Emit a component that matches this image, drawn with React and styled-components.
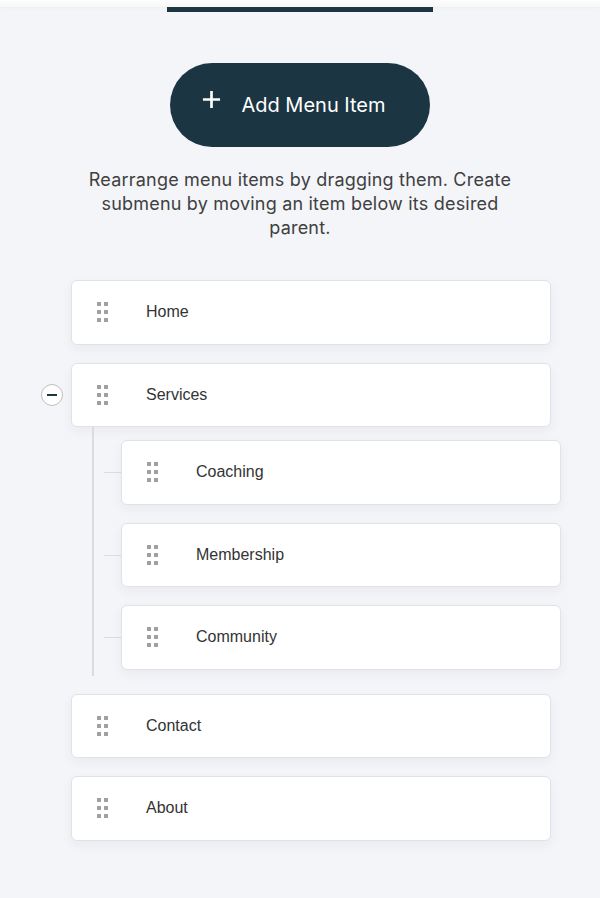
import React from "react";
import styled, { createGlobalStyle } from "styled-components";

const GlobalStyle = createGlobalStyle`
  body {
    margin: 0;
    background: #f4f5f9;
    font-family: "Liberation Sans", Arial, sans-serif;
  }
`;

const menu = [
  { id: 1, label: "Home" },
  {
    id: 2,
    label: "Services",
    children: [
      { id: 3, label: "Coaching" },
      { id: 4, label: "Membership" },
      { id: 5, label: "Community" },
    ],
  },
  { id: 6, label: "Contact" },
  { id: 7, label: "About" },
];

function DragHandle() {
  return (
    <Handle>
      {Array.from({ length: 6 }).map((_, i) => (
        <span key={i} />
      ))}
    </Handle>
  );
}

function Node({ item }) {
  const hasChildren = item.children && item.children.length > 0;
  return (
    <NodeWrap>
      <Card>
        {hasChildren && (
          <Toggle aria-label="collapse">
            <span />
          </Toggle>
        )}
        <DragHandle />
        <Label>{item.label}</Label>
      </Card>
      {hasChildren && (
        <SubTree>
          {item.children.map((child) => (
            <SubRow key={child.id}>
              <Card $narrow>
                <DragHandle />
                <Label>{child.label}</Label>
              </Card>
            </SubRow>
          ))}
        </SubTree>
      )}
    </NodeWrap>
  );
}

export default function App() {
  return (
    <>
      <GlobalStyle />
      <Page>
        <TopStrip />
        <Indicator />
        <AddButton>
          <PlusIcon viewBox="0 0 20 20">
            <path d="M10 1v18M1 10h18" />
          </PlusIcon>
          Add Menu Item
        </AddButton>
        <Hint>
          Rearrange menu items by dragging them. Create submenu by moving an
          item below its desired parent.
        </Hint>
        <Tree>
          {menu.map((item) => (
            <Node key={item.id} item={item} />
          ))}
        </Tree>
      </Page>
    </>
  );
}

const Page = styled.div`
  min-height: 898px;
  display: flex;
  flex-direction: column;
  align-items: center;
  padding-bottom: 58px;
  box-sizing: border-box;
`;

const TopStrip = styled.div`
  align-self: stretch;
  height: 7px;
  background: linear-gradient(#fdfdfd, #f7f7f7);
  box-shadow: 0 1px 3px rgba(0, 0, 0, 0.03);
`;

const Indicator = styled.div`
  width: 266px;
  height: 5px;
  background: #1b3642;
`;

const AddButton = styled.button`
  margin-top: 51px;
  width: 260px;
  height: 84px;
  border: none;
  border-radius: 42px;
  background: #1b3642;
  color: #fff;
  font-family: Inter, "Noto Sans", sans-serif;
  font-size: 20px;
  font-weight: 400;
  display: flex;
  align-items: center;
  justify-content: center;
  gap: 20px;
  padding: 0 12px 0 0;
  cursor: pointer;
`;

const PlusIcon = styled.svg`
  width: 19px;
  height: 19px;
  stroke: #fff;
  stroke-width: 2.8;
  fill: none;
  transform: translateY(-6px);
`;

const Hint = styled.p`
  margin: 21px 0 0;
  max-width: 440px;
  text-align: center;
  font-family: Inter, "Noto Sans", sans-serif;
  font-size: 18px;
  letter-spacing: 0.2px;
  line-height: 24px;
  color: #404040;
`;

const Tree = styled.div`
  margin-top: 40px;
  align-self: stretch;
  padding-left: 71px;
  display: flex;
  flex-direction: column;
  gap: 18px;
`;

const NodeWrap = styled.div`
  display: flex;
  flex-direction: column;
`;

const Card = styled.div`
  position: relative;
  box-sizing: border-box;
  width: ${(p) => (p.$narrow ? "440px" : "480px")};
  height: 64.5px;
  background: #fff;
  border: 1px solid #e1e2e5;
  border-radius: 6px;
  box-shadow: 0 4px 12px rgba(20, 30, 50, 0.05);
  display: flex;
  align-items: center;
  padding-left: 25px;
`;

const Handle = styled.div`
  display: grid;
  grid-template-columns: 4px 4px;
  grid-auto-rows: 4px;
  column-gap: 3px;
  row-gap: 4px;
  margin-right: 38px;
  span {
    background: #a0a0a0;
  }
`;

const Label = styled.span`
  font-size: 16px;
  color: #333;
`;

const Toggle = styled.div`
  position: absolute;
  left: -31px;
  top: 50%;
  transform: translateY(-50%);
  width: 22px;
  height: 22px;
  box-sizing: border-box;
  border-radius: 50%;
  border: 1px solid #bfbfbf;
  background: #fff;
  display: flex;
  align-items: center;
  justify-content: center;
  span {
    width: 10px;
    height: 2px;
    background: #1b3642;
  }
`;

const SubTree = styled.div`
  position: relative;
  display: flex;
  flex-direction: column;
  gap: 18px;
  padding: 13px 0 6px 50px;
  &::before {
    content: "";
    position: absolute;
    left: 21px;
    top: 0;
    bottom: 0;
    width: 2px;
    background: #dcdcdc;
  }
`;

const SubRow = styled.div`
  position: relative;
  &::before {
    content: "";
    position: absolute;
    left: -17px;
    top: 50%;
    width: 17px;
    height: 1px;
    background: #dcdcdc;
  }
`;
